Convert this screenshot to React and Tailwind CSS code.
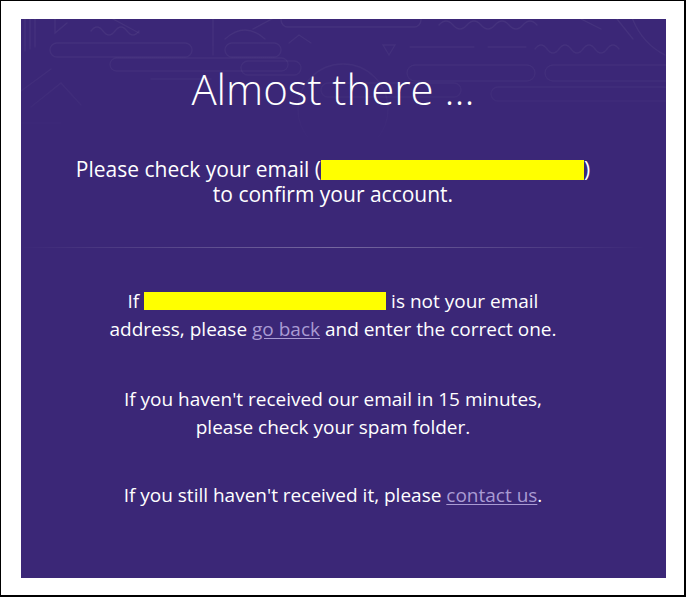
import React from 'react';

const Pattern = () => (
  <svg
    className="absolute left-0 top-0"
    width="645"
    height="130"
    viewBox="0 0 645 130"
    fill="none"
  >
    <defs>
      <linearGradient id="fade" x1="0" y1="0" x2="0" y2="1">
        <stop offset="0" stopColor="#fff" stopOpacity="1" />
        <stop offset="0.5" stopColor="#fff" stopOpacity="0.6" />
        <stop offset="1" stopColor="#fff" stopOpacity="0" />
      </linearGradient>
      <mask id="m">
        <rect width="645" height="130" fill="url(#fade)" />
      </mask>
    </defs>
    <g mask="url(#m)" stroke="rgba(255,255,255,0.055)" strokeWidth="1.3" strokeLinecap="round">
      {/* left vertical lines */}
      <path d="M4 0V32M9 0V30M14 0V28" />
      <path d="M34 0V14L46 4" />
      {/* waves */}
      <path d="M70 12q6-8 12 0t12 0t12 0t12 0" />
      <path d="M92 0L118 14" />
      <rect x="29" y="24" width="142" height="14" rx="7" />
      <rect x="89" y="39" width="178" height="13" rx="6.5" />
      <path d="M0 72L30 50" />
      <path d="M10 88L40 64L60 86" />
      <path d="M192 0V36" />
      <path d="M204 20q20-18 40 0" />
      <rect x="204" y="24" width="56" height="14" rx="7" />
      <rect x="220" y="42" width="60" height="14" rx="7" />
      <path d="M268 24l10-8l12 8" />
      <path d="M232 10L262 -6" />
      <circle cx="322" cy="90" r="45" />
      <rect x="260" y="-6" width="140" height="14" rx="7" />
      <path d="M418 6q7-8 14 0t14 0t14 0t14 0t14 0t14 0t14 0" />
      <path d="M362 26h12l-6 10z" />
      <path d="M389 28h64M467 28h38" />
      <path d="M514 30q6-8 12 0t12 0t12 0t12 0t12 0t12 0t12 0" />
      <rect x="386" y="46" width="128" height="16" rx="8" />
      <rect x="524" y="46" width="130" height="16" rx="8" />
      <path d="M560 0L580 10M596 0L612 20" />
      <path d="M610 -4q10 28 34 40" />
      <rect x="300" y="64" width="140" height="14" rx="7" />
      <rect x="470" y="68" width="180" height="14" rx="7" />
      <path d="M130 60h60M0 104h40" />
    </g>
  </svg>
);

const Redacted = ({ className }) => (
  <span className={`inline-block bg-[#ffff00] align-middle ${className}`} />
);

export default function App() {
  return (
    <div className="w-[686px] h-[597px] bg-white border-l border-t border-r-2 border-b-2 border-black pt-[18px] pl-[20px]">
      <div
        className="relative w-[645px] h-[559px] overflow-hidden bg-[#3b2777] text-white"
        style={{ fontFamily: '"Open Sans", "Liberation Sans", sans-serif' }}
      >
        <Pattern />
        <div className="relative w-[624px] flex flex-col items-center text-center">
          <h1 className="mt-[46px] text-[42px] leading-[48px] font-light">Almost there ...</h1>

          <p className="mt-[44px] text-[21px] leading-[25px]">
            Please check your email (<Redacted className="w-[263px] h-[20px] -mt-[3px]" />)
            <br />
            to confirm your account.
          </p>

          <div className="mt-[40px] w-full h-px bg-gradient-to-r from-transparent via-white/30 to-transparent" />

          <p className="mt-[39px] text-[19px] leading-[28px]">
            If <Redacted className="w-[242px] h-[18px] -mt-[3px]" /> is not your email
            <br />
            address, please{' '}
            <a href="#" className="text-[#a99bd3] underline underline-offset-2">
              go back
            </a>{' '}
            and enter the correct one.
          </p>

          <p className="mt-[42px] text-[19px] leading-[28px]">
            If you haven't received our email in 15 minutes,
            <br />
            please check your spam folder.
          </p>

          <p className="mt-[40px] text-[19px] leading-[28px]">
            If you still haven't received it, please{' '}
            <a href="#" className="text-[#a99bd3] underline underline-offset-2">
              contact us
            </a>
            .
          </p>
        </div>
      </div>
    </div>
  );
}
